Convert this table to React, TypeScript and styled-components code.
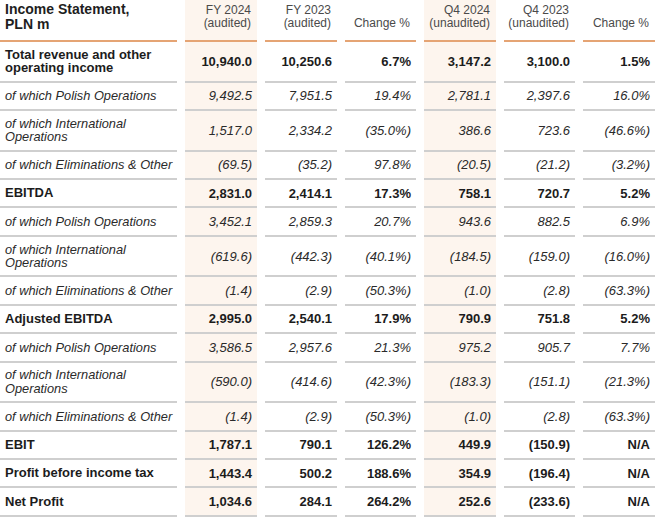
import React from "react";
import styled, { createGlobalStyle, css } from "styled-components";

const GlobalStyle = createGlobalStyle`
  html, body {
    margin: 0;
    padding: 0;
    background: #ffffff;
  }
  body {
    font-family: "Liberation Sans", Arial, sans-serif;
    color: #222;
    overflow: hidden;
  }
`;

type Kind = "bold" | "sub";

interface Row {
  label: string;
  kind: Kind;
  tall?: boolean;
  values: string[];
}

const rows: Row[] = [
  {
    label: "Total revenue and other operating income",
    kind: "bold",
    tall: true,
    values: ["10,940.0", "10,250.6", "6.7%", "3,147.2", "3,100.0", "1.5%"],
  },
  {
    label: "of which Polish Operations",
    kind: "sub",
    values: ["9,492.5", "7,951.5", "19.4%", "2,781.1", "2,397.6", "16.0%"],
  },
  {
    label: "of which International Operations",
    kind: "sub",
    tall: true,
    values: ["1,517.0", "2,334.2", "(35.0%)", "386.6", "723.6", "(46.6%)"],
  },
  {
    label: "of which Eliminations & Other",
    kind: "sub",
    values: ["(69.5)", "(35.2)", "97.8%", "(20.5)", "(21.2)", "(3.2%)"],
  },
  {
    label: "EBITDA",
    kind: "bold",
    values: ["2,831.0", "2,414.1", "17.3%", "758.1", "720.7", "5.2%"],
  },
  {
    label: "of which Polish Operations",
    kind: "sub",
    values: ["3,452.1", "2,859.3", "20.7%", "943.6", "882.5", "6.9%"],
  },
  {
    label: "of which International Operations",
    kind: "sub",
    tall: true,
    values: ["(619.6)", "(442.3)", "(40.1%)", "(184.5)", "(159.0)", "(16.0%)"],
  },
  {
    label: "of which Eliminations & Other",
    kind: "sub",
    values: ["(1.4)", "(2.9)", "(50.3%)", "(1.0)", "(2.8)", "(63.3%)"],
  },
  {
    label: "Adjusted EBITDA",
    kind: "bold",
    values: ["2,995.0", "2,540.1", "17.9%", "790.9", "751.8", "5.2%"],
  },
  {
    label: "of which Polish Operations",
    kind: "sub",
    values: ["3,586.5", "2,957.6", "21.3%", "975.2", "905.7", "7.7%"],
  },
  {
    label: "of which International Operations",
    kind: "sub",
    tall: true,
    values: ["(590.0)", "(414.6)", "(42.3%)", "(183.3)", "(151.1)", "(21.3%)"],
  },
  {
    label: "of which Eliminations & Other",
    kind: "sub",
    values: ["(1.4)", "(2.9)", "(50.3%)", "(1.0)", "(2.8)", "(63.3%)"],
  },
  {
    label: "EBIT",
    kind: "bold",
    values: ["1,787.1", "790.1", "126.2%", "449.9", "(150.9)", "N/A"],
  },
  {
    label: "Profit before income tax",
    kind: "bold",
    values: ["1,443.4", "500.2", "188.6%", "354.9", "(196.4)", "N/A"],
  },
  {
    label: "Net Profit",
    kind: "bold",
    values: ["1,034.6", "284.1", "264.2%", "252.6", "(233.6)", "N/A"],
  },
];

const headers: { top?: string; bottom: string }[] = [
  { top: "FY 2024", bottom: "(audited)" },
  { top: "FY 2023", bottom: "(audited)" },
  { bottom: "Change %" },
  { top: "Q4 2024", bottom: "(unaudited)" },
  { top: "Q4 2023", bottom: "(unaudited)" },
  { bottom: "Change %" },
];

// columns that carry the pale peach highlight
const highlighted = [0, 3];

const Table = styled.div`
  display: grid;
  grid-template-columns: 177px 72px 72px 71px 72px 71px 72px;
  column-gap: 8px;
  width: 667px;
`;

const Cell = styled.div<{ $shade?: boolean }>`
  box-sizing: border-box;
  display: flex;
  align-items: center;
  border-bottom: 2px solid #cfcfcf;
  background: ${(p) => (p.$shade ? "#fdf5ee" : "transparent")};
`;

const HeadTitle = styled(Cell)`
  height: 42px;
  align-items: flex-start;
  padding: 2px 0 0 5px;
  border-bottom-color: #e5a474;
  font-size: 14px;
  font-weight: 700;
  line-height: 15px;
  color: #1e1e1e;
`;

const HeadCol = styled(Cell)`
  height: 42px;
  flex-direction: column;
  align-items: flex-end;
  justify-content: flex-end;
  padding: 0 6px 11px 0;
  border-bottom-color: #e5a474;
  font-size: 12px;
  line-height: 12.5px;
  color: #4a4a4a;
  text-align: right;
`;

const rowText = (kind: Kind) =>
  kind === "bold"
    ? css`
        font-weight: 700;
        font-style: normal;
        color: #1c1c1c;
      `
    : css`
        font-weight: 400;
        font-style: italic;
        color: #2a2a2a;
      `;

const Label = styled(Cell)<{ $kind: Kind; $tall?: boolean }>`
  height: ${(p) => (p.$tall ? "40.6px" : "28.4px")};
  padding: 0 0 0 5px;
  font-size: ${(p) => (p.$kind === "bold" ? "13px" : "12.8px")};
  line-height: 13.5px;
  ${(p) => rowText(p.$kind)}
`;

const Value = styled(Cell)<{ $kind: Kind; $tall?: boolean }>`
  height: ${(p) => (p.$tall ? "40.6px" : "28.4px")};
  justify-content: flex-end;
  padding-right: 5px;
  font-size: 13px;
  ${(p) => rowText(p.$kind)}
`;

export default function App() {
  return (
    <>
      <GlobalStyle />
      <Table>
        <HeadTitle>
          Income Statement,
          <br />
          PLN m
        </HeadTitle>
        {headers.map((h, i) => (
          <HeadCol key={i} $shade={highlighted.includes(i)}>
            {h.top && <span>{h.top}</span>}
            <span>{h.bottom}</span>
          </HeadCol>
        ))}
        {rows.map((r, ri) => (
          <React.Fragment key={ri}>
            <Label $kind={r.kind} $tall={r.tall}>
              {r.label}
            </Label>
            {r.values.map((v, vi) => (
              <Value
                key={vi}
                $kind={r.kind}
                $tall={r.tall}
                $shade={highlighted.includes(vi)}
              >
                {v}
              </Value>
            ))}
          </React.Fragment>
        ))}
      </Table>
    </>
  );
}
